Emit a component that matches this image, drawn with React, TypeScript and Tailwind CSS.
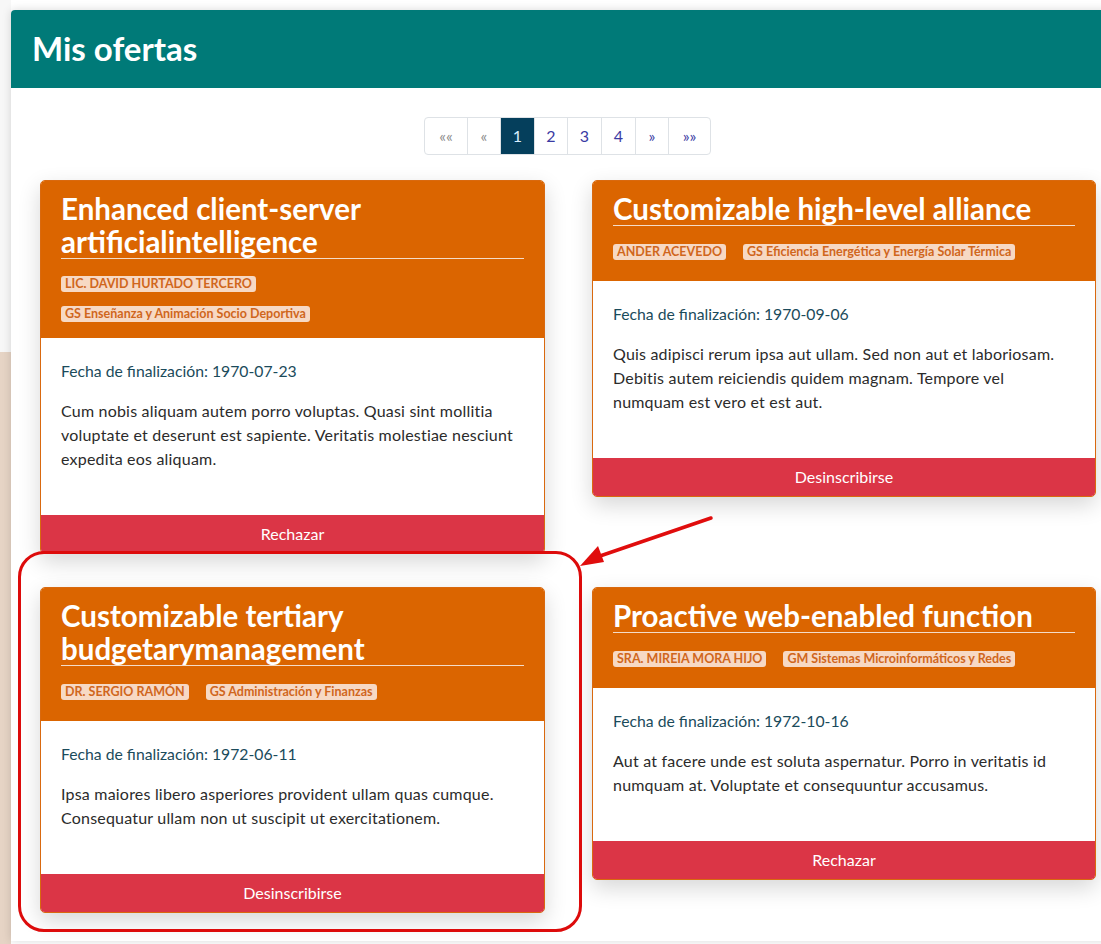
import React from "react";

type Offer = {
  title: string;
  badges: string[];
  date: string;
  text: string;
  action: string;
  stacked?: boolean;
};

const offers: Offer[] = [
  {
    title: "Enhanced client-server artificialintelligence",
    badges: ["LIC. DAVID HURTADO TERCERO", "GS Enseñanza y Animación Socio Deportiva"],
    date: "1970-07-23",
    text: "Cum nobis aliquam autem porro voluptas. Quasi sint mollitia voluptate et deserunt est sapiente. Veritatis molestiae nesciunt expedita eos aliquam.",
    action: "Rechazar",
    stacked: true,
  },
  {
    title: "Customizable high-level alliance",
    badges: ["ANDER ACEVEDO", "GS Eficiencia Energética y Energía Solar Térmica"],
    date: "1970-09-06",
    text: "Quis adipisci rerum ipsa aut ullam. Sed non aut et laboriosam. Debitis autem reiciendis quidem magnam. Tempore vel numquam est vero et est aut.",
    action: "Desinscribirse",
  },
  {
    title: "Customizable tertiary budgetarymanagement",
    badges: ["DR. SERGIO RAMÓN", "GS Administración y Finanzas"],
    date: "1972-06-11",
    text: "Ipsa maiores libero asperiores provident ullam quas cumque. Consequatur ullam non ut suscipit ut exercitationem.",
    action: "Desinscribirse",
  },
  {
    title: "Proactive web-enabled function",
    badges: ["SRA. MIREIA MORA HIJO", "GM Sistemas Microinformáticos y Redes"],
    date: "1972-10-16",
    text: "Aut at facere unde est soluta aspernatur. Porro in veritatis id numquam at. Voluptate et consequuntur accusamus.",
    action: "Rechazar",
  },
];

const OfferCard = ({ title, badges, date, text, action, stacked }: Offer) => (
  <div className="rounded-[5px] border border-[#d9690f] overflow-hidden bg-white shadow-[0_8px_22px_rgba(0,0,0,0.16)]">
    <div className={`bg-[#db6500] px-5 pt-[11px] ${stacked ? "pb-[16px]" : "pb-[21px]"}`}>
      <h3 className="text-[29.5px] leading-[33px] font-bold text-white border-b border-[#f4dcc8]">
        {title}
      </h3>
      <div
        className={
          stacked
            ? "mt-[17px] flex flex-col items-start gap-[14px]"
            : "mt-[18px] flex flex-wrap gap-x-[17px] gap-y-[14px]"
        }
      >
        {badges.map((b, i) => (
          <span
            key={i}
            className="bg-[#f7d9c4] text-[#d0661c] text-[12.5px] leading-[16px] font-bold px-[4px] rounded-[3px]"
          >
            {b}
          </span>
        ))}
      </div>
    </div>
    <div className="px-5 pt-[21px] pb-[44px]">
      <p className="text-[15.75px] leading-6 text-[#1b4b5b] mb-4">
        Fecha de finalización: {date}
      </p>
      <p className="text-[16px] leading-6 tracking-[0.2px] text-[#2b2b2b]">{text}</p>
    </div>
    <button className="w-full h-[38px] bg-[#db3546] text-white text-[16px] flex items-center justify-center">
      {action}
    </button>
  </div>
);

export default function App() {
  const pages = [
    { label: "««", w: "w-[42px]", state: "disabled" },
    { label: "«", w: "w-[33px]", state: "disabled" },
    { label: "1", w: "w-[34px]", state: "active" },
    { label: "2", w: "w-[33px]", state: "" },
    { label: "3", w: "w-[34px]", state: "" },
    { label: "4", w: "w-[34px]", state: "" },
    { label: "»", w: "w-[33px]", state: "" },
    { label: "»»", w: "w-[42px]", state: "" },
  ];

  return (
    <div
      className="relative w-[1101px] h-[944px] overflow-hidden bg-white flex"
      style={{ fontFamily: "Lato, 'Open Sans', sans-serif" }}
    >
      {/* page background strip */}
      <div className="w-[11px] shrink-0 flex flex-col">
        <div className="h-[352px] bg-[#f7f7f7]"></div>
        <div className="flex-1 bg-[#e6d4c5]"></div>
      </div>

      <div className="pt-[10px] shrink-0">
        <div className="w-[1113px] h-[931px] bg-white rounded-tl-[4px] shadow-[0_0_10px_rgba(0,0,0,0.15)]">
          <div className="h-[78px] bg-[#007a78] rounded-tl-[4px] px-[21px] flex items-center">
            <h1 className="text-[33px] font-bold text-white">Mis ofertas</h1>
          </div>

          <div className="px-[29px] pt-[29px]">
            <div className="flex justify-center">
              <ul className="flex border border-[#dee2e6] rounded-[4px] overflow-hidden">
                {pages.map((p, i) => (
                  <li
                    key={i}
                    className={`${p.w} h-[36px] flex items-center justify-center text-[16px] ${
                      i > 0 ? "border-l border-[#dee2e6]" : ""
                    } ${
                      p.state === "active"
                        ? "bg-[#053f5c] text-[#d8eeff] border-[#053f5c]"
                        : p.state === "disabled"
                        ? "text-[#8c8c8c] text-[13px]"
                        : "text-[#3a3aa3]"
                    } ${p.label.includes("»") ? "text-[13px]" : ""}`}
                  >
                    {p.label}
                  </li>
                ))}
              </ul>
            </div>

            <div className="mt-[25px] grid grid-cols-[505px_504px] gap-x-[47px] gap-y-[33px] items-start">
              {offers.map((o, i) => (
                <OfferCard key={i} {...o} />
              ))}
            </div>
          </div>
        </div>
      </div>

      {/* annotation */}
      <div className="absolute left-[18px] top-[551px] w-[564px] h-[381px] border-[3px] border-[#dd0b0b] rounded-[26px] pointer-events-none"></div>
      <svg className="absolute left-0 top-0 pointer-events-none" width="1101" height="944">
        <line x1="711" y1="518" x2="600" y2="556" stroke="#e00d0d" strokeWidth="3.5" strokeLinecap="round" />
        <polygon points="580,566 598,546 604,562" fill="#e00d0d" />
      </svg>
    </div>
  );
}
